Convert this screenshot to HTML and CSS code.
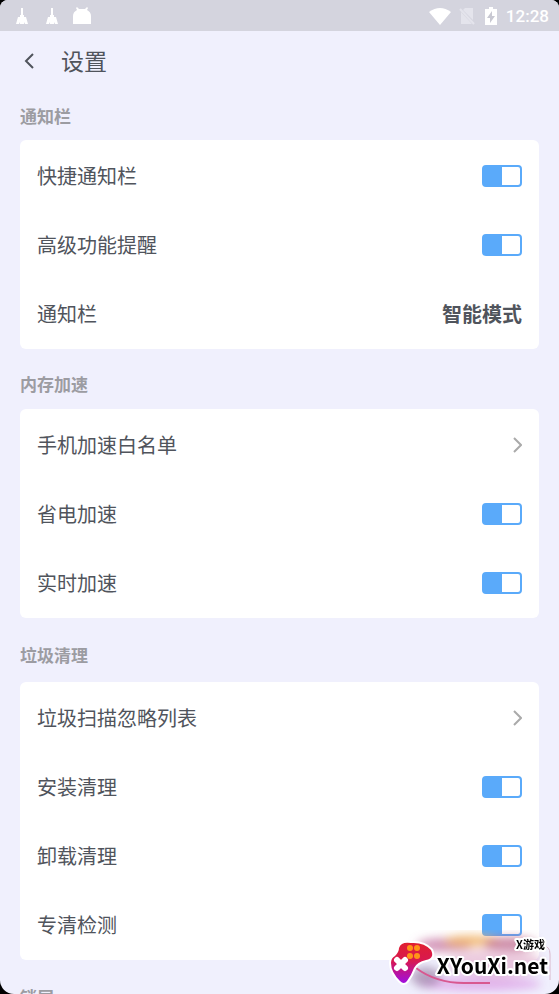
FILE: index.html
```html
<!DOCTYPE html>
<html lang="zh-CN">
<head>
<meta charset="utf-8">
<meta name="viewport" content="width=device-width, initial-scale=1">
<title>设置</title>
<link rel="stylesheet" href="styles.css">
</head>
<body>
<div class="screen">
  <div class="status">
    <svg class="broom" viewBox="0 0 12 18" aria-hidden="true"><path d="M5 1h2v7h-2zM4 8h4v2h2l2 7H9l-1-2v2H4v-2l-1 2H0l2-7h2z"/></svg>
    <svg class="broom" viewBox="0 0 12 18" aria-hidden="true"><path d="M5 1h2v7h-2zM4 8h4v2h2l2 7H9l-1-2v2H4v-2l-1 2H0l2-7h2z"/></svg>
    <svg class="droid" viewBox="0 0 18 18" aria-hidden="true"><path d="M0 17V9Q0 5 4 3L3 1l1-1 2 2h6l2-2 1 1-1 2q4 2 4 6v8z"/></svg>
    <span class="spacer"></span>
    <svg class="wifi" viewBox="0 0 22 18" aria-hidden="true"><path d="M0 5Q11-3 22 5L11 18z"/></svg>
    <svg class="sim" viewBox="0 0 16 18" aria-hidden="true"><path d="M6 1h8v12L4 3zM2 5l11 12H2z"/><path class="slash" d="M1 2l14 15"/></svg>
    <svg class="battery" viewBox="0 0 12 18" aria-hidden="true"><path d="M4 0h4v2h4v16H0V2h4z"/><path class="bolt" d="M7 4L2 11h3v5l5-7H7z"/></svg>
    <time class="clock">12:28</time>
  </div>
  <header class="bar">
    <button class="back" type="button" aria-label="返回"><svg viewBox="0 0 10 18" aria-hidden="true"><path d="M9 2L2 9l7 7"/></svg></button>
    <h1>设置</h1>
  </header>
  <main>
    <section class="group first">
      <h2>通知栏</h2>
      <div class="card">
        <label class="row">快捷通知栏<input class="switch" type="checkbox" role="switch" checked></label>
        <label class="row">高级功能提醒<input class="switch" type="checkbox" role="switch" checked></label>
        <button class="row" type="button">通知栏<strong>智能模式</strong></button>
      </div>
    </section>
    <section class="group">
      <h2>内存加速</h2>
      <div class="card">
        <a class="row" href="#whitelist">手机加速白名单<svg class="chevron" viewBox="0 0 9 16" aria-hidden="true"><path d="M1 1l7 7-7 7"/></svg></a>
        <label class="row">省电加速<input class="switch" type="checkbox" role="switch" checked></label>
        <label class="row">实时加速<input class="switch" type="checkbox" role="switch" checked></label>
      </div>
    </section>
    <section class="group wide">
      <h2>垃圾清理</h2>
      <div class="card">
        <a class="row" href="#ignored">垃圾扫描忽略列表<svg class="chevron" viewBox="0 0 9 16" aria-hidden="true"><path d="M1 1l7 7-7 7"/></svg></a>
        <label class="row">安装清理<input class="switch" type="checkbox" role="switch" checked></label>
        <label class="row">卸载清理<input class="switch" type="checkbox" role="switch" checked></label>
        <label class="row">专清检测<input class="switch" type="checkbox" role="switch" checked></label>
      </div>
    </section>
    <section class="group wide">
      <h2>锁屏</h2>
    </section>
  </main>
</div>
<svg class="mark" viewBox="0 0 179 64" role="img" aria-label="X游戏 XYouXi.net">
  <defs>
    <linearGradient id="pad" x1="0" y1="0" x2="0" y2="1"><stop offset="0" stop-color="#e02030"/><stop offset=".45" stop-color="#d81850"/><stop offset="1" stop-color="#a010e0"/></linearGradient>
    <filter id="soft" x="-30%" y="-60%" width="160%" height="220%"><feGaussianBlur stdDeviation="5"/></filter>
  </defs>
  <g filter="url(#soft)">
    <ellipse cx="65" cy="15" rx="28" ry="7" fill="#c06a9a" opacity=".7"/>
    <ellipse cx="92" cy="11" rx="28" ry="6" fill="#f0b060" opacity=".8"/>
    <ellipse cx="130" cy="14" rx="26" ry="7" fill="#b85a80" opacity=".7"/>
    <ellipse cx="115" cy="33" rx="48" ry="14" fill="#dfa8c8" opacity=".6"/>
    <ellipse cx="100" cy="54" rx="62" ry="7" fill="#dc98e4" opacity=".7"/>
    <ellipse cx="46" cy="47" rx="15" ry="10" fill="#8f7098" opacity=".6"/>
  </g>
  <path class="cord" d="M36 38Q56 53 84 53H110"/>
  <path class="edge" d="M163 16q7 0 7 8v26"/>
  <path class="pad" d="M22 14Q25 12 31 13Q44 12 51 20Q55 28 46 30Q37 32 34 38Q31 46 27 51Q24 55 20 51Q11 42 11 33Q11 28 15 26Q19 22 19 18Q20 15 22 14z"/>
  <path class="cross" d="M17 30l8 8M25 30l-8 8"/>
  <g fill="#ff9418"><circle cx="30" cy="18" r="3"/><circle cx="37" cy="18" r="3"/><circle cx="30" cy="26" r="3"/><circle cx="37" cy="26" r="3"/></g>
  <text class="small" x="165" y="19">X游戏</text>
  <text class="name" x="168" y="44">XYouXi.net</text>
</svg>
</body>
</html>
```
FILE: styles.css
```css
* { box-sizing: border-box; }
html { height: 100%; }
body {
  height: 100%;
  margin: 0;
  background: #000;
  color: #50545c;
  font: 20px/30px "Noto Sans CJK SC", "Noto Sans", sans-serif;
  overflow: hidden;
}
.screen {
  height: 100%;
  display: flex;
  flex-direction: column;
  background: #f0f0fd;
  border-radius: 8px 8px 14px 14px;
  overflow: hidden;
}
.status {
  flex: none;
  display: flex;
  align-items: center;
  height: 31px;
  padding: 0 10px 0 16px;
  background: #d4d4de;
  color: #fff;
}
.status svg { flex: none; height: 18px; fill: #fff; }
.broom { width: 12px; margin-right: 18px; }
.broom + .droid { margin-left: -3px; }
.droid { width: 18px; }
.spacer { flex: 1; }
.wifi { width: 22px; margin-right: 8px; }
.status .sim { width: 16px; margin-right: 10px; fill: #e4e4ec; }
.slash { stroke: #e4e4ec; stroke-width: 2; }
.battery { width: 12px; margin-right: 9px; }
.bolt { fill: #c8c8d2; }
.clock { font: 500 17px/30px Roboto, sans-serif; }
.bar {
  flex: none;
  display: flex;
  align-items: center;
  height: 60px;
  padding: 0 20px;
}
.back {
  width: 41px;
  height: 40px;
  padding: 0 0 0 4px;
  border: 0;
  background: none;
  text-align: left;
}
.back svg { display: block; width: 10px; height: 18px; fill: none; stroke: #50545c; stroke-width: 2; }
h1 { margin: 0; padding-bottom: 2px; font-size: 23px; font-weight: 400; line-height: 34px; }
main { flex: 1; min-height: 0; padding: 0 20px; overflow: hidden; }
h2 {
  margin: 0;
  padding: 23px 0 13px;
  color: #9c9ca2;
  font-size: 17px;
  font-weight: 700;
  line-height: 24px;
}
.first h2 { padding: 13px 0 12px; }
.wide h2 { padding: 25px 0 15px; }
.card { padding: 1px 0; background: #fff; border-radius: 6px; }
.row {
  display: flex;
  align-items: center;
  justify-content: space-between;
  width: 100%;
  height: 69px;
  padding: 0 17px;
  border: 0;
  background: none;
  color: inherit;
  font: inherit;
  text-decoration: none;
}
.row strong { font-weight: 700; }
.switch {
  appearance: none;
  width: 40px;
  height: 22px;
  margin: 0;
  border: 2px solid #5aaafa;
  border-radius: 4px;
  background: linear-gradient(90deg, #5aaafa 50%, #fff 50%);
}
.chevron { width: 9px; height: 16px; fill: none; stroke: #aaa; stroke-width: 2; }
.mark {
  position: fixed;
  right: 0;
  bottom: 0;
  width: 179px;
  height: 64px;
  pointer-events: none;
}
.cord { fill: none; stroke: #d85890; stroke-width: 2; }
.edge { fill: none; stroke: #d8b8cc; stroke-width: 1; }
.pad { fill: url(#pad); stroke: #fff; stroke-width: 4; paint-order: stroke; }
.cross { stroke: #fff; stroke-width: 6; stroke-linecap: round; }
.mark text { text-anchor: end; fill: #000; stroke: #fff; stroke-width: 4px; stroke-linejoin: round; paint-order: stroke; }
.small { font: 700 11px "Noto Sans CJK SC", sans-serif; }
.name { font: 700 21px "Noto Sans CJK SC", sans-serif; }
```
